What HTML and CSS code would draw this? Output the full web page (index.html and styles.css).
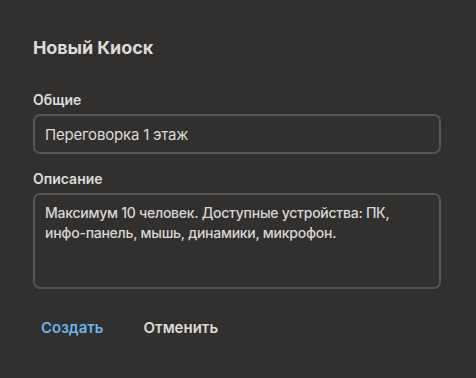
FILE: index.html
```html
<!DOCTYPE html>
<html lang="ru">

<head>
    <meta charset="UTF-8">
    <meta name="viewport" content="width=device-width, initial-scale=1.0">
    <title>Новый Киоск</title>
    <link rel="stylesheet" href="styles.css">
</head>

<body>
    <div class="dialog">
        <h2 class="title">Новый Киоск</h2>

        <label class="label" for="name">Общие</label>
        <div class="field" id="name">Переговорка 1 этаж</div>

        <label class="label" for="desc">Описание</label>
        <div class="field area" id="desc">Максимум 10 человек. Доступные устройства: ПК, инфо-панель, мышь, динамики, микрофон.</div>

        <div class="actions">
            <button class="btn primary">Создать</button>
            <button class="btn">Отменить</button>
        </div>
    </div>
</body>

</html>
```

FILE: styles.css
```css
body {
    margin: 0;
    background-color: #32302e;
    font-family: Inter, "Noto Sans", sans-serif;
    color: #e2e0de;
}

.dialog {
    padding: 37px 35px 0 33px;
    display: flex;
    flex-direction: column;
}

.title {
    margin: 0 0 32px 0;
    font-size: 18px;
    font-weight: 700;
    line-height: 22px;
    letter-spacing: -0.1px;
    color: #dddbd9;
}

.label {
    font-size: 14px;
    font-weight: 600;
    line-height: 18px;
    margin-bottom: 5px;
    color: #dddbd9;
}

.field {
    box-sizing: border-box;
    border: 2px solid #575553;
    border-radius: 7px;
    padding: 10px 10px 0 10px;
    height: 40px;
    font-size: 15px;
    line-height: 18px;
    letter-spacing: -0.2px;
    color: #dcdad8;
    margin-bottom: 16px;
}

.area {
    height: 96px;
    padding: 8px 36px 0 10px;
    font-size: 14px;
    font-weight: 500;
    line-height: 20px;
    letter-spacing: -0.25px;
    color: #d8d6d4;
    margin-bottom: 0;
}

.actions {
    display: flex;
    margin-top: 21px;
}

.btn {
    background: none;
    border: none;
    font-family: inherit;
    font-size: 15px;
    font-weight: 600;
    color: #dcdad8;
    padding: 8px 8px;
    margin-right: 24px;
    cursor: pointer;
}

.primary {
    color: #6db1ef;
}
```
